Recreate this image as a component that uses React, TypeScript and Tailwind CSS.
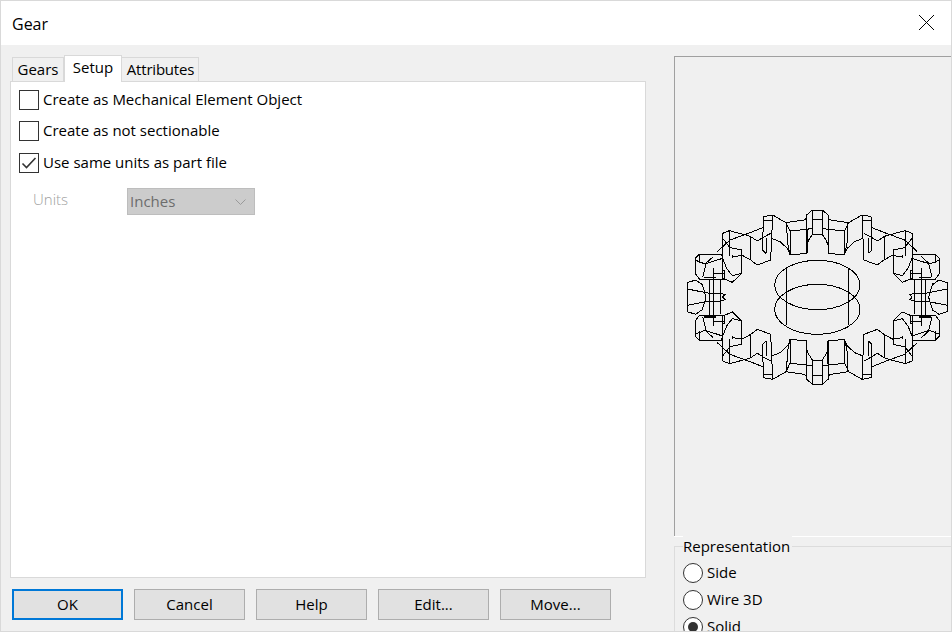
import React from "react";

const font = { fontFamily: '"Open Sans", "Noto Sans", sans-serif' };

const q = [
  "M412 30L397 30L380 45L380 160L330 165",
  "M397 30L397 103L412 103",
  "M397 103L385 122L380 135",
  "M397 58L412 58",
  "M372 60L380 55",
  "M250 50L278 45L318 68L372 60",
  "M318 68L330 93L380 88L397 85",
  "M330 93L330 165",
  "M320 70L322 125L330 165",
  "M250 50L248 150L258 160",
  "M278 45L275 115L272 180L232 195L212 180",
  "M275 115L300 125L322 145L330 160",
  "M250 60L278 60",
  "M212 110L212 180",
  "M205 100L248 83",
  "M212 110L232 123L250 112L272 100",
  "M258 115L258 160",
  "M128 100L148 92L205 107L212 110",
  "M128 100L128 237",
  "M148 92L148 167",
  "M128 115L150 143",
  "M112 155L150 120L205 100",
  "M150 143L185 150L185 220L157 247L128 235",
  "M185 165L212 180",
  "M155 170L185 167",
  "M128 175L140 205L157 227L185 220",
  "M157 165L157 175",
  "M45 175L58 163L125 163L128 180",
  "M45 175L45 220L58 237L133 237",
  "M58 163L58 190",
  "M45 180L75 192L128 175",
  "M75 192L100 170",
  "M78 192L68 232",
  "M125 212L133 212L133 237",
  "M100 205L100 291",
  "M100 220L133 220",
  "M22 291L22 248L47 240L68 255",
  "M22 267L88 280L122 280L135 284L128 291",
  "M88 237L88 291",
  "M122 240L122 291",
  "M65 250L72 270L78 291",
];

function Gear() {
  const paths = q.map((d, i) => <path key={i} d={d} />);
  return (
    <svg width="272" height="190" viewBox="0 0 816 570" className="block" fill="none" stroke="#000" strokeWidth="3" shapeRendering="crispEdges" style={{ overflow: "visible" }}>
      <g>{paths}</g>
      <g transform="translate(824,0) scale(-1,1)">{paths}</g>
      <g transform="translate(0,583) scale(1,-1)">{paths}</g>
      <g transform="translate(824,583) scale(-1,-1)">{paths}</g>
      <path d="M72 232L108 232M716 232L752 232M72 351L108 351M716 351L752 351" strokeWidth="5" />
      <path d="M380 90L380 160M444 423L444 493" strokeWidth="5" />
      <ellipse cx="412" cy="255" rx="128" ry="74" />
      <ellipse cx="412" cy="328" rx="128" ry="75" />
      <path d="M319 208L319 375M505 208L505 375" />
    </svg>
  );
}

function Check({ checked, label, cls }: { checked?: boolean; label: string; cls: string }) {
  return (
    <div className={`flex items-center h-5 ${cls}`}>
      <div className="w-5 h-5 border border-[#333333] bg-white flex items-center justify-center shrink-0">
        {checked && (
          <svg width="16" height="12" viewBox="0 0 16 12" fill="none" stroke="#333" strokeWidth="1.6">
            <path d="M1.5 6.5L5.5 10.5L14.5 1" />
          </svg>
        )}
      </div>
      <span className="ml-1 pb-[2px] text-[15px] text-black whitespace-nowrap">{label}</span>
    </div>
  );
}

function Radio({ checked, label }: { checked?: boolean; label: string }) {
  return (
    <div className="flex items-center h-5 mb-[7px]">
      <div className="w-5 h-5 rounded-full border border-[#333333] bg-white flex items-center justify-center shrink-0">
        {checked && <div className="w-[10px] h-[10px] rounded-full bg-[#333333]" />}
      </div>
      <span className="ml-1 pb-[2px] text-[15px] text-black whitespace-nowrap">{label}</span>
    </div>
  );
}

function Btn({ label, primary }: { label: string; primary?: boolean }) {
  return (
    <div className={`w-[111px] h-[31px] flex items-center justify-center bg-[#e1e1e1] text-[15px] text-black ${primary ? "border-2 border-[#0078d7]" : "border border-[#adadad]"}`}>
      {label}
    </div>
  );
}

export default function App() {
  return (
    <div style={font} className="w-[952px] h-[632px] flex flex-col overflow-hidden bg-[#f0f0f0] border border-[#d9d9d9]">
      <div className="h-[44px] shrink-0 bg-white flex items-center justify-between pl-[11px] pr-[17px]">
        <span className="text-[16px] text-black pt-[2px]">Gear</span>
        <svg width="15" height="15" viewBox="0 0 15 15" stroke="#000" strokeWidth="1" fill="none" className="self-start mt-[14px]">
          <path d="M0 0L15 15M15 0L0 15" />
        </svg>
      </div>
      <div className="flex-1 flex min-h-0">
        <div className="w-[673px] shrink-0 pl-[9px] pr-[28px] flex flex-col">
          <div className="flex items-end h-[36px] pl-[2px] shrink-0 relative z-10">
            <div className="w-[52px] h-[24px] border border-[#d9d9d9] border-b-0 flex items-center justify-center text-[15px] text-black">Gears</div>
            <div className="w-[58px] h-[27px] border border-[#d9d9d9] border-b-0 bg-white -mb-px pb-[3px] flex items-center justify-center text-[15px] text-black">Setup</div>
            <div className="w-[77px] h-[24px] border border-[#d9d9d9] border-b-0 border-l-0 pl-[1px] flex items-center justify-center text-[15px] tracking-[-0.2px] text-black">Attributes</div>
          </div>
          <div className="h-[497px] shrink-0 bg-white border border-[#d9d9d9] pl-[8px] pt-[8px]">
            <Check label="Create as Mechanical Element Object" cls="" />
            <Check label="Create as not sectionable" cls="mt-[11px]" />
            <Check checked label="Use same units as part file" cls="mt-[12px]" />
            <div className="flex mt-[15px] pl-[14px]">
              <span className="w-[94px] text-[15px] font-light text-[#a0a0a0] leading-[22px]">Units</span>
              <div className="w-[128px] h-[27px] bg-[#cccccc] border border-[#bdbdbd] flex items-center justify-between pl-[2px] pr-[8px] text-[15px] text-[#6d6d6d]">
                <span>Inches</span>
                <svg width="11" height="6" viewBox="0 0 11 6" fill="none" stroke="#9a9a9a">
                  <path d="M0.5 0.5L5.5 5.5L10.5 0.5" />
                </svg>
              </div>
            </div>
          </div>
          <div className="flex gap-[11px] pl-[2px] mt-[11px]">
            <Btn label="OK" primary />
            <Btn label="Cancel" />
            <Btn label="Help" />
            <Btn label="Edit..." />
            <Btn label="Move..." />
          </div>
        </div>
        <div className="flex-1 flex flex-col min-w-0">
          <div className="mt-[11px] h-[480px] shrink-0 border-t border-l border-[#a0a0a0] pl-[5px] pt-[143px]">
            <Gear />
          </div>
          <div className="h-px bg-white shrink-0" />
          <div className="mt-[9px] flex-1 border-t border-l border-[#dcdcdc] pl-[8px] min-h-0">
            <div className="-mt-[10px] h-[18px] flex items-center text-[15px] text-black"><span className="bg-[#f0f0f0] pr-[2px]">Representation</span></div>
            <div className="mt-[8px]">
              <Radio label="Side" />
              <Radio label="Wire 3D" />
              <Radio checked label="Solid" />
            </div>
          </div>
        </div>
      </div>
    </div>
  );
}
